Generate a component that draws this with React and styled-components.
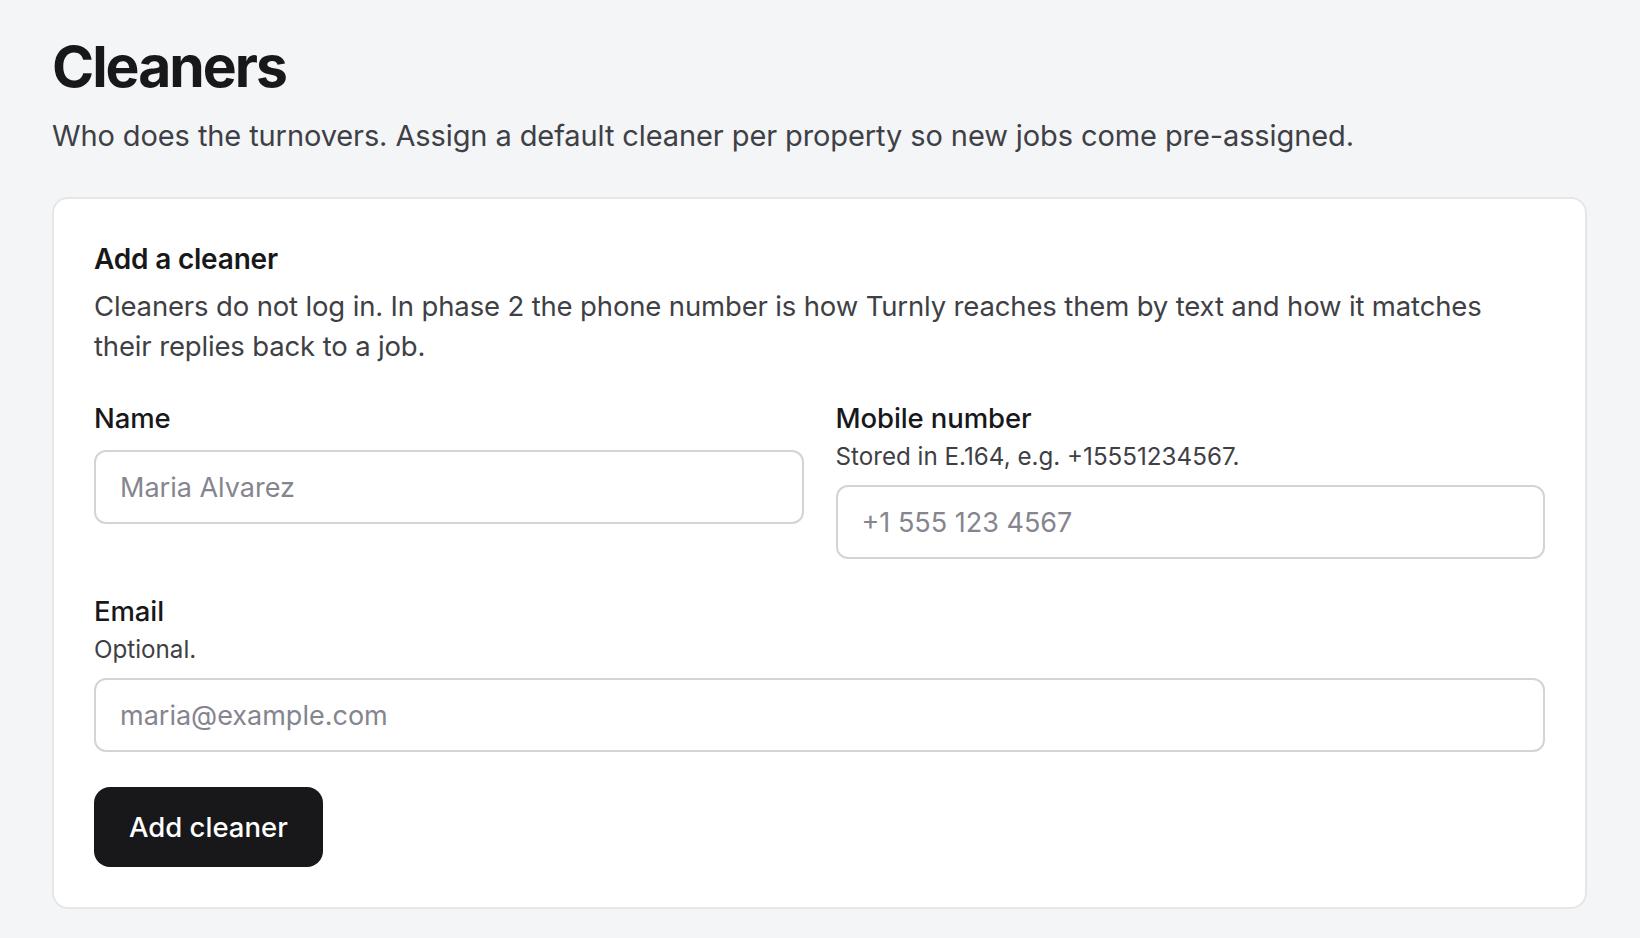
import React from "react";
import styled, { createGlobalStyle } from "styled-components";

const Global = createGlobalStyle`
  * { box-sizing: border-box; }
  html, body { margin: 0; padding: 0; }
  body {
    background: #f4f5f7;
    font-family: Inter, "Noto Sans", "Liberation Sans", sans-serif;
    color: #18181b;
    -webkit-font-smoothing: antialiased;
  }
`;

const Page = styled.main`
  padding: 31px 53px 32px 52px;
  min-height: 938px;
`;

const Title = styled.h1`
  margin: 0;
  font-size: 57px;
  line-height: 72px;
  font-weight: 700;
  letter-spacing: -0.035em;
  color: #18181b;
`;

const Subtitle = styled.p`
  margin: 11px 0 0;
  font-size: 29px;
  line-height: 44px;
  letter-spacing: -0.1px;
  color: #3f3f46;
`;

const Card = styled.section`
  margin-top: 39px;
  background: #ffffff;
  border: 2px solid #e6e6e9;
  border-radius: 16px;
  padding: 40px;
`;

const CardTitle = styled.h2`
  margin: 0;
  font-size: 28px;
  line-height: 40px;
  font-weight: 600;
  letter-spacing: -0.2px;
  color: #18181b;
`;

const CardText = styled.p`
  margin: 7px 0 0;
  font-size: 27.5px;
  line-height: 40px;
  letter-spacing: -0.15px;
  color: #3f3f46;
`;

const Grid = styled.div`
  margin-top: 32px;
  display: grid;
  grid-template-columns: 1fr 1fr;
  column-gap: 32px;
  row-gap: 32px;
`;

const Field = styled.div`
  display: flex;
  flex-direction: column;
  grid-column: ${(p) => (p.$wide ? "1 / -1" : "auto")};
`;

const Label = styled.label`
  font-size: 27.5px;
  line-height: 40px;
  font-weight: 500;
  letter-spacing: -0.1px;
  color: #18181b;
`;

const Help = styled.span`
  font-size: 24.2px;
  line-height: 32px;
  color: #3f3f46;
  margin-top: 3px;
`;

const Input = styled.input`
  margin-top: ${(p) => (p.$afterHelp ? "12px" : "12px")};
  height: 74px;
  width: 100%;
  border: 2px solid #d4d4d8;
  border-radius: 12px;
  background: #ffffff;
  padding: 0 24px;
  font-family: inherit;
  font-size: 27px;
  color: #18181b;
  outline: none;
  &::placeholder { color: #85858f; }
`;

const Button = styled.button`
  align-self: flex-start;
  margin-top: 34.5px;
  height: 80px;
  padding: 0 35px;
  border: none;
  border-radius: 16px;
  background: #18181b;
  color: #ffffff;
  font-family: inherit;
  font-size: 27.5px;
  font-weight: 500;
  cursor: pointer;
`;

export default function App() {
  return (
    <>
      <Global />
      <Page>
        <Title>Cleaners</Title>
        <Subtitle>
          Who does the turnovers. Assign a default cleaner per property so new jobs come pre-assigned.
        </Subtitle>
        <Card>
          <CardTitle>Add a cleaner</CardTitle>
          <CardText>
            Cleaners do not log in. In phase 2 the phone number is how Turnly reaches them by text and how it matches
            their replies back to a job.
          </CardText>
          <Grid>
            <Field>
              <Label htmlFor="name">Name</Label>
              <Input id="name" placeholder="Maria Alvarez" />
            </Field>
            <Field>
              <Label htmlFor="phone">Mobile number</Label>
              <Help>Stored in E.164, e.g. +15551234567.</Help>
              <Input id="phone" $afterHelp placeholder="+1 555 123 4567" />
            </Field>
            <Field $wide>
              <Label htmlFor="email">Email</Label>
              <Help>Optional.</Help>
              <Input id="email" $afterHelp placeholder="maria@example.com" />
            </Field>
          </Grid>
          <Button type="button">Add cleaner</Button>
        </Card>
      </Page>
    </>
  );
}
